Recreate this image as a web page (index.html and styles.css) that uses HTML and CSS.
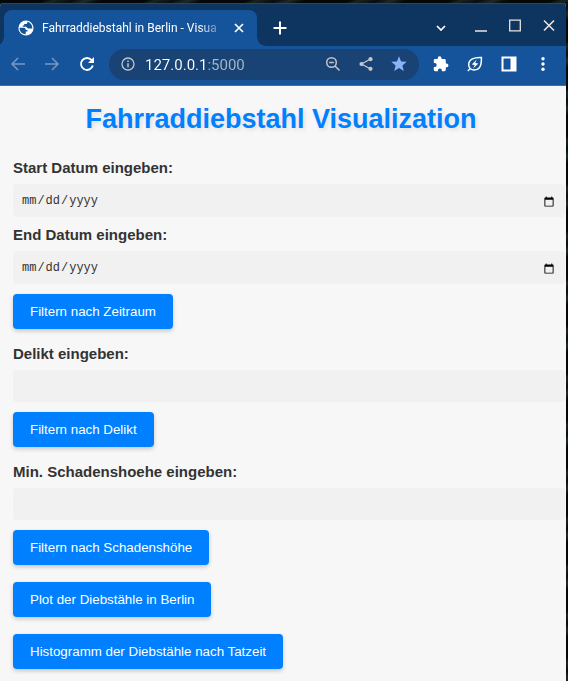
FILE: index.html
```html
<!DOCTYPE html>
<html lang="de">
<head>
<meta charset="utf-8">
<meta name="viewport" content="width=device-width, initial-scale=1">
<title>Fahrraddiebstahl in Berlin - Visualization</title>
<link rel="stylesheet" href="styles.css">
</head>
<body>
<div class="window">
  <header class="tabstrip">
    <div class="tab">
      <svg class="favicon" viewBox="0 0 16 16" aria-hidden="true"><circle cx="8" cy="8" r="7.6" fill="#fff"/><path d="M1.500 7.800H5.300c1.600 0 2.500.8 2.500 2.100h1.700v1.700H7.700v2.700C4.200 14.300 1.500 11.500 1.500 7.800zM9.400 1.800v.6c0 .9-.7 1.500-1.600 1.500H6.200v1.600H4.700v1.200h3.200c1.100 0 1.300 1.900 2.500 1.900h3.900C14.500 5.200 12.300 2.500 9.400 1.800z" fill="#15539a"/></svg>
      <span class="tab-title">Fahrraddiebstahl in Berlin - Visua</span>
      <button class="icon-button tab-close" type="button" aria-label="Tab schließen"><svg width="10" height="10" viewBox="0 0 10 10"><path d="M1 1l8 8M9 1L1 9" stroke="#fff" stroke-width="1.700"/></svg></button>
    </div>
    <button class="icon-button new-tab" type="button" aria-label="Neuer Tab"><svg width="14" height="14" viewBox="0 0 14 14"><path d="M7 .5v13M.5 7h13" stroke="#fff" stroke-width="2"/></svg></button>
    <div class="window-controls">
      <button class="icon-button" type="button" aria-label="Tabs durchsuchen"><svg width="12" height="14" viewBox="0 0 12 14"><path d="M2 7l4 4 4-4" fill="none" stroke="#fff" stroke-width="1.700"/></svg></button>
      <button class="icon-button" type="button" aria-label="Minimieren"><svg width="12" height="14" viewBox="0 0 12 14"><path d="M0 12h12" stroke="#e9e4df" stroke-width="1.400"/></svg></button>
      <button class="icon-button" type="button" aria-label="Maximieren"><svg width="12" height="14" viewBox="0 0 12 14"><path d="M.7 1.200h10.600v10.600H.7z" fill="none" stroke="#e9e4df" stroke-width="1.300"/></svg></button>
      <button class="icon-button" type="button" aria-label="Schließen"><svg width="12" height="14" viewBox="0 0 12 14"><path d="M1 1.500l10 10M11 1.500l-10 10" stroke="#e9e4df" stroke-width="1.600"/></svg></button>
    </div>
  </header>

  <nav class="toolbar" aria-label="Navigation">
    <button class="icon-button nav-button" type="button" aria-label="Zurück"><svg width="14" height="14" viewBox="0 0 14 14"><path d="M14 7H1.500M7 1L1 7l6 6" fill="none" stroke="#7999c3" stroke-width="1.500"/></svg></button>
    <button class="icon-button nav-button" type="button" aria-label="Vorwärts"><svg width="14" height="14" viewBox="0 0 14 14"><path d="M0 7h12.500M7 1l6 6-6 6" fill="none" stroke="#7999c3" stroke-width="1.500"/></svg></button>
    <button class="icon-button nav-button" type="button" aria-label="Neu laden"><svg width="16" height="16" viewBox="0 0 16 16"><path d="M13.800 9.500A6 6 0 1 1 12.700 4.200" fill="none" stroke="#fff" stroke-width="1.900"/><path d="M15 1v6H9z" fill="#fff"/></svg></button>
    <div class="address-bar">
      <button class="icon-button" type="button" aria-label="Websiteinformationen"><svg width="14" height="14" viewBox="0 0 14 14"><circle cx="7" cy="7" r="6" fill="none" stroke="#c2c6cb" stroke-width="1.300"/><path d="M7 6.200v4M7 3.600v1.500" stroke="#c2c6cb" stroke-width="1.500"/></svg></button>
      <input class="url" type="text" value="127.0.0.1:5000" aria-label="Adresse">
      <button class="icon-button" type="button" aria-label="Zoom"><svg width="16" height="16" viewBox="0 0 16 16"><circle cx="6.500" cy="6.500" r="4.800" fill="none" stroke="#c2c6cb" stroke-width="1.500"/><path d="M4.200 6.500h4.600M10 10l4.500 4.500" stroke="#c2c6cb" stroke-width="1.500"/></svg></button>
      <button class="icon-button" type="button" aria-label="Teilen"><svg width="16" height="16" viewBox="0 0 16 16"><path d="M12.500 3L3.500 8l9 5" fill="none" stroke="#c2c6cb" stroke-width="1.300"/><g fill="#c2c6cb"><circle cx="12.500" cy="3.200" r="2.100"/><circle cx="3.500" cy="8" r="2.100"/><circle cx="12.500" cy="12.800" r="2.100"/></g></svg></button>
      <button class="icon-button" type="button" aria-label="Lesezeichen"><svg width="16" height="16" viewBox="0 0 16 16"><path d="M8 .2l2.100 5.200 5.600.4-4.300 3.600 1.400 5.500L8 11.900l-4.800 3 1.400-5.500L.3 5.800l5.600-.4z" fill="#8ab4f8"/></svg></button>
    </div>
    <div class="extensions">
      <button class="icon-button" type="button" aria-label="Erweiterungen"><svg width="16" height="16" viewBox="0 0 16 16"><path d="M13.600 7.600h-.8V4.300c0-.8-.6-1.400-1.400-1.400H8.500v-.8a1.900 1.900 0 0 0-3.800 0v.8H2.100C1.300 2.900.8 3.500.8 4.300v2.800h.9a2 2 0 0 1 0 4H.8v2.700c0 .8.500 1.400 1.300 1.400h2.800v-.8a2 2 0 0 1 4 0v.8h2.500c.8 0 1.400-.6 1.400-1.400v-2.500h.8a1.850 1.850 0 0 0 0-3.700z" fill="#fff"/></svg></button>
      <button class="icon-button" type="button" aria-label="Energiesparmodus"><svg width="16" height="16" viewBox="0 0 16 16"><path d="M14.400 1.500C7.500 1.200 1.500 3 1.700 9c.1 3.300 2.600 5.100 5.500 5 6-.1 7.400-5 7.200-12.500zM3.500 12.300L.8 15" fill="none" stroke="#fff" stroke-width="1.500"/><path d="M9.700 3.400L4.800 8.600l2.900.5-1.600 3.500 5.200-5-3.100-.6z" fill="#fff"/></svg></button>
      <button class="icon-button" type="button" aria-label="Seitenleiste"><svg width="16" height="16" viewBox="0 0 16 16"><path d="M.5.500h15v15H.5zM2.500 2.500v11h7v-11z" fill="#fff" fill-rule="evenodd"/></svg></button>
      <button class="icon-button" type="button" aria-label="Menü"><svg width="16" height="16" viewBox="0 0 16 16"><g fill="#fff"><circle cx="8" cy="2.700" r="1.700"/><circle cx="8" cy="8" r="1.700"/><circle cx="8" cy="13.300" r="1.700"/></g></svg></button>
    </div>
  </nav>

  <main class="page">
    <h1>Fahrraddiebstahl Visualization</h1>
    <form>
      <label for="start">Start Datum eingeben:</label>
      <input class="field date" type="date" id="start">
      <label for="end">End Datum eingeben:</label>
      <input class="field date" type="date" id="end">
      <button class="action" type="button">Filtern nach Zeitraum</button>
    </form>
    <form>
      <label for="delikt">Delikt eingeben:</label>
      <input class="field" type="text" id="delikt">
      <button class="action" type="button">Filtern nach Delikt</button>
    </form>
    <form>
      <label for="schaden">Min. Schadenshoehe eingeben:</label>
      <input class="field" type="text" id="schaden">
      <button class="action" type="button">Filtern nach Schadenshöhe</button>
    </form>
    <button class="action" type="button">Plot der Diebstähle in Berlin</button>
    <button class="action" type="button">Histogramm der Diebstähle nach Tatzeit</button>
  </main>
</div>
</body>
</html>
```
FILE: styles.css
```css
* {
  box-sizing: border-box;
}

body {
  margin: 0;
  padding: 3px 2px 0 0;
  min-height: 100vh;
  display: flex;
  background: repeating-linear-gradient(155deg, #050809 0 19px, #17251f 23px, #090c12 31px, #1d2a28 37px, #050809 43px);
  font-family: "Liberation Sans", Arial, sans-serif;
}

.window {
  flex: 1;
  min-width: 0;
  display: flex;
  flex-direction: column;
  overflow: hidden;
  border-radius: 4px 4px 0 0;
  background: #f7f7f7;
}

.icon-button {
  display: flex;
  flex: none;
  padding: 0;
  border: 0;
  background: none;
}

.tabstrip {
  display: flex;
  height: 43px;
  padding: 6px 11px 0 4px;
  background: #0d3560;
  border-top: 1px solid #204872;
}

.tab {
  position: relative;
  display: flex;
  align-items: center;
  width: 253px;
  padding: 0 13px 0 14px;
  border-radius: 8px 8px 0 0;
  background: #15539a;
}

.tab::before,
.tab::after {
  content: "";
  position: absolute;
  bottom: 0;
  width: 8px;
  height: 8px;
}

.tab::before {
  right: 100%;
  background: radial-gradient(circle at 0 0, transparent 7px, #15539a 8px);
}

.tab::after {
  left: 100%;
  background: radial-gradient(circle at 100% 0, transparent 7px, #15539a 8px);
}

.favicon {
  flex: none;
  width: 16px;
  height: 16px;
}

.tab-title {
  flex: 1;
  margin: 0 8px;
  white-space: nowrap;
  font: 12px/16px Roboto, sans-serif;
  color: #fff;
  -webkit-mask-image: linear-gradient(to left, transparent, #000 28px);
  mask-image: linear-gradient(to left, transparent, #000 28px);
}

.new-tab {
  align-self: center;
  margin-left: 16px;
}

.window-controls {
  display: flex;
  align-items: center;
  gap: 22px;
  height: 31px;
  margin-left: auto;
}

.window-controls .icon-button:first-child {
  margin-right: 6px;
}

.toolbar {
  display: flex;
  align-items: center;
  height: 40px;
  padding: 0 15px 3px 11px;
  background: #15539a;
  border-bottom: 1px solid #3b70ac;
}

.nav-button {
  margin-right: 20px;
}

.nav-button:nth-child(3) {
  margin-right: 14px;
}

.address-bar {
  display: flex;
  flex: 1;
  align-items: center;
  gap: 17px;
  min-width: 0;
  height: 31px;
  padding: 0 12px;
  border-radius: 16px;
  background: #194374;
}

.url {
  flex: 1;
  min-width: 0;
  margin-left: -7px;
  padding: 2px 0 0;
  border: 0;
  outline: 0;
  font: 15px/20px Roboto, sans-serif;
  color: transparent;
  background: linear-gradient(to right, #fff 61px, #a6b8cd 61px);
  -webkit-background-clip: text;
  background-clip: text;
}

.extensions {
  display: flex;
  gap: 18px;
  margin-left: 14px;
}

.page {
  flex: 1;
  padding: 18px 17px 12px 13px;
  color: #333;
}

h1 {
  margin: 0 0 25px;
  font-size: 27px;
  line-height: 31px;
  text-align: center;
  color: #0080ff;
  text-shadow: 2px 2px 4px rgba(0, 0, 0, 0.1);
}

label {
  display: block;
  margin-bottom: 8px;
  font-size: 15px;
  line-height: 16px;
  font-weight: bold;
}

.field {
  display: block;
  box-sizing: content-box;
  width: 100%;
  height: 16px;
  margin: 0 0 10px;
  padding: 8px;
  border: 0;
  border-radius: 4px;
  background: #f1f1f1;
  color: #333;
}

.date {
  height: 17px;
  padding: 9px 8px 7px;
  font: 12px/17px "Liberation Mono", monospace;
}

.action {
  display: block;
  height: 35px;
  margin: 0 0 17px;
  padding: 0 17px;
  border: 0;
  border-radius: 4px;
  background: #0080ff;
  color: #fff;
  font-family: inherit;
  box-shadow: 0 2px 4px rgba(0, 0, 0, 0.2);
}

.page > .action:last-child {
  margin-bottom: 0;
}
```
